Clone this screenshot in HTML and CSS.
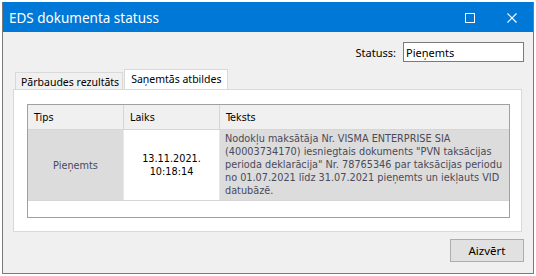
FILE: index.html
```html
<!DOCTYPE html>
<html lang="lv">

<head>
  <meta charset="UTF-8">
  <title>EDS dokumenta statuss</title>
  <link rel="stylesheet" href="styles.css">
</head>

<body>
  <div class="window">
    <div class="titlebar">
      <span class="title">EDS dokumenta statuss</span>
      <span class="win-btn">
        <svg width="10" height="10" viewBox="0 0 10 10"><rect x="0.5" y="0.5" width="9" height="9" fill="none" stroke="#fff" stroke-width="1"/></svg>
      </span>
      <span class="win-btn">
        <svg width="10" height="10" viewBox="0 0 10 10"><path d="M0.5 0.5 L9.5 9.5 M9.5 0.5 L0.5 9.5" stroke="#fff" stroke-width="1.2"/></svg>
      </span>
    </div>

    <div class="content">
      <div class="status-row">
        <label for="status">Statuss:</label>
        <input type="text" id="status" value="Pieņemts" readonly>
      </div>

      <div class="tabs">
        <div class="tab">Pārbaudes rezultāts</div>
        <div class="tab active">Saņemtās atbildes</div>
      </div>

      <div class="tab-panel">
        <div class="grid">
          <table>
            <thead>
              <tr>
                <th class="col-tips">Tips</th>
                <th class="col-laiks">Laiks</th>
                <th>Teksts</th>
              </tr>
            </thead>
            <tbody>
              <tr>
                <td class="cell-tips">Pieņemts</td>
                <td class="cell-laiks">13.11.2021.<br>10:18:14</td>
                <td class="cell-text">Nodokļu maksātāja Nr. VISMA ENTERPRISE SIA<br>(40003734170) iesniegtais dokuments "PVN taksācijas<br>perioda deklarācija" Nr. 78765346 par taksācijas periodu<br>no 01.07.2021 līdz 31.07.2021 pieņemts un iekļauts VID<br>datubāzē.</td>
              </tr>
            </tbody>
          </table>
        </div>
      </div>

      <div class="footer">
        <button class="btn">Aizvērt</button>
      </div>
    </div>
  </div>
</body>

</html>
```

FILE: styles.css
```css
body {
  margin: 0;
  background: #fff;
  font-family: "Noto Sans", sans-serif;
  font-size: 11px;
  color: #000;
}

.window {
  margin: 2px;
  width: 532px;
  height: 272px;
  box-sizing: border-box;
  border: 1px solid #7a7a7a;
  border-top-color: #0078d7;
  background: #f0f0f0;
  display: flex;
  flex-direction: column;
}

.titlebar {
  height: 29px;
  background: #0078d7;
  color: #fff;
  display: flex;
  align-items: center;
}

.title {
  flex: 1;
  padding-left: 6px;
  font-size: 13.5px;
}

.win-btn {
  width: 42px;
  height: 29px;
  display: flex;
  align-items: center;
  justify-content: center;
}

.content {
  flex: 1;
  padding: 10px 9px 0 10px;
  display: flex;
  flex-direction: column;
}

.status-row {
  display: flex;
  justify-content: flex-end;
  align-items: center;
  gap: 7px;
}

.status-row input {
  width: 121px;
  height: 20px;
  box-sizing: border-box;
  border: 1px solid #7a7a7a;
  padding: 0 2px;
  font-family: inherit;
  font-size: 11px;
  background: #fff;
}

.tabs {
  display: flex;
  align-items: flex-end;
  margin-top: 7px;
  padding-left: 2px;
  height: 20px;
  font-size: 10.5px;
}

.tab {
  height: 17px;
  box-sizing: border-box;
  border: 1px solid #d9d9d9;
  border-bottom: none;
  padding: 0 3px 0 5px;
  line-height: 18px;
  background: #f0f0f0;
}

.tab.active {
  height: 20px;
  line-height: 19px;
  background: #fff;
  padding: 0 6px;
  margin-left: 1px;
}

.tab-panel {
  height: 143px;
  box-sizing: border-box;
  border: 1px solid #d9d9d9;
  background: #fff;
  margin-right: 2px;
  padding: 14px 11px 13px 13px;
}

.grid {
  height: 100%;
  box-sizing: border-box;
  border: 1px solid #a0a0a0;
  background: #fff;
}

table {
  width: 100%;
  border-collapse: collapse;
  font-family: "DejaVu Sans Condensed", "DejaVu Sans", sans-serif;
  font-size: 10.8px;
}

th {
  height: 24px;
  background: #f0f0f0;
  font-weight: normal;
  text-align: left;
  padding: 0 6px;
  border-right: 1px solid #d6d6d6;
  border-bottom: 1px solid #d6d6d6;
}

th:last-child {
  border-right: none;
}

.col-tips,
.col-laiks {
  width: 83px;
}

td {
  padding: 0 3px;
  border-right: 1px solid #e8e8e8;
  border-bottom: 1px solid #d6d6d6;
  vertical-align: middle;
  line-height: 13px;
}

td:last-child {
  border-right: none;
}

.cell-tips {
  background: #dcdcdc;
  color: #4a4a5a;
  text-align: center;
}

.cell-laiks {
  background: #fff;
  text-align: center;
}

.cell-text {
  background: #dcdcdc;
  color: #4a4a5a;
  padding: 2px 3px 3px 5px;
  white-space: nowrap;
}

.footer {
  display: flex;
  justify-content: flex-end;
  padding-top: 7px;
}

.btn {
  width: 74px;
  height: 23px;
  background: #e1e1e1;
  border: 1px solid #adadad;
  font-family: inherit;
  font-size: 11.5px;
  color: #000;
  padding: 0;
}
```
